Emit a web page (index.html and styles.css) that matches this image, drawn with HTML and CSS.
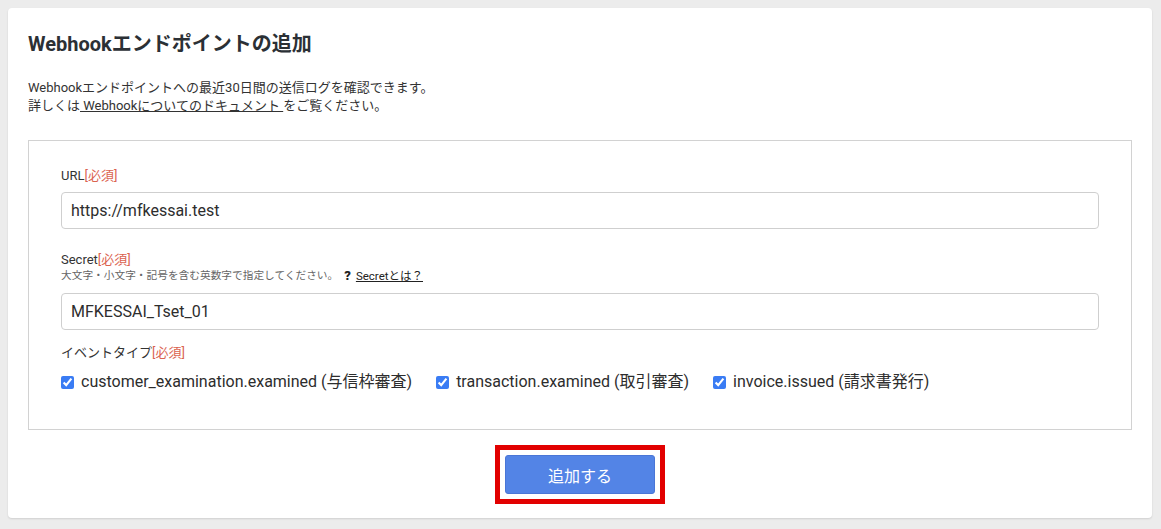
FILE: index.html
```html
<!DOCTYPE html>
<html lang="ja">
<head>
<meta charset="utf-8">
<title>Webhookエンドポイントの追加</title>
<link rel="stylesheet" href="styles.css">
</head>
<body>
<div class="page">
  <section class="card">
    <h1 class="title">Webhookエンドポイントの追加</h1>
    <p class="desc">Webhookエンドポイントへの最近30日間の送信ログを確認できます。<br>詳しくは<a class="doc-link" href="#"> Webhookについてのドキュメント </a>をご覧ください。</p>
    <div class="form-box">
      <div class="field">
        <label class="label">URL<span class="req">[必須]</span></label>
        <div class="input">https://mfkessai.test</div>
      </div>
      <div class="field field-secret">
        <label class="label">Secret<span class="req">[必須]</span></label>
        <div class="hint">大文字・小文字・記号を含む英数字で指定してください。<span class="qicon">?</span><a class="hint-link" href="#">Secretとは？</a></div>
        <div class="input">MFKESSAI_Tset_01</div>
      </div>
      <div class="field field-events">
        <label class="label">イベントタイプ<span class="req">[必須]</span></label>
        <div class="checks">
          <label class="check"><input type="checkbox" checked><span>customer_examination.examined (与信枠審査)</span></label>
          <label class="check"><input type="checkbox" checked><span>transaction.examined (取引審査)</span></label>
          <label class="check"><input type="checkbox" checked><span>invoice.issued (請求書発行)</span></label>
        </div>
      </div>
    </div>
    <div class="actions">
      <div class="highlight">
        <button class="btn" type="button">追加する</button>
      </div>
    </div>
  </section>
</div>
</body>
</html>
```

FILE: styles.css
```css
* { box-sizing: border-box; }
html, body { margin: 0; padding: 0; }
body {
  background: #ececec;
  font-family: "Roboto", "Noto Sans CJK JP", sans-serif;
  color: #333;
  width: 1161px;
  height: 529px;
  overflow: hidden;
}
.page {
  padding: 8px 9px 11px 8px;
}
.card {
  background: #fff;
  border-radius: 4px;
  box-shadow: 0 1px 2px rgba(0,0,0,0.12);
  padding: 22px 20px 14px 20px;
  height: 510px;
}
.title {
  margin: 0;
  font-size: 20px;
  line-height: 28px;
  font-weight: 700;
  color: #2b3035;
}
.desc {
  margin: 21px 0 0 0;
  font-size: 13px;
  line-height: 18px;
  color: #333;
}
.doc-link {
  color: #333;
  text-decoration: underline;
}
.form-box {
  margin-top: 25px;
  border: 1px solid #d2d2d2;
  padding: 26px 32px 37px 32px;
  height: 290px;
}
.field { display: flex; flex-direction: column; }
.label {
  font-size: 13px;
  line-height: 17px;
  color: #333;
}
.req { color: #db6350; }
.input {
  margin-top: 8px;
  height: 37px;
  border: 1px solid #cfcfcf;
  border-radius: 4px;
  padding: 0 9px;
  display: flex;
  align-items: center;
  font-size: 16px;
  color: #2d2d2d;
}
.field-secret { margin-top: 22px; }
.hint {
  margin-top: 1px;
  font-size: 10.7px;
  line-height: 14px;
  color: #666;
  display: flex;
  align-items: center;
}
.qicon {
  font-weight: 900;
  color: #222;
  font-size: 13px;
  margin: 0 5px 0 6px;
}
.hint-link { color: #222; text-decoration: underline; font-size: 11.5px; }
.field-secret .input { margin-top: 10px; }
.field-events { margin-top: 14px; }
.checks {
  margin-top: 11px;
  display: flex;
  gap: 24px;
}
.check {
  display: flex;
  align-items: center;
  font-size: 16px;
  line-height: 20px;
  color: #2d2d2d;
}
.check input {
  width: 13px;
  height: 13px;
  margin: 0 7px 0 0;
  accent-color: #3a7cf4;
}
.actions {
  display: flex;
  justify-content: center;
  margin-top: 15px;
}
.highlight {
  border: 5px solid #e20000;
  padding: 5px;
}
.btn {
  display: block;
  width: 150px;
  height: 39px;
  background: #5384e6;
  border: 1px solid #4a76d6;
  border-radius: 3px;
  color: #fff;
  font-family: "Roboto", "Noto Sans CJK JP", sans-serif;
  font-size: 16px;
}
```
